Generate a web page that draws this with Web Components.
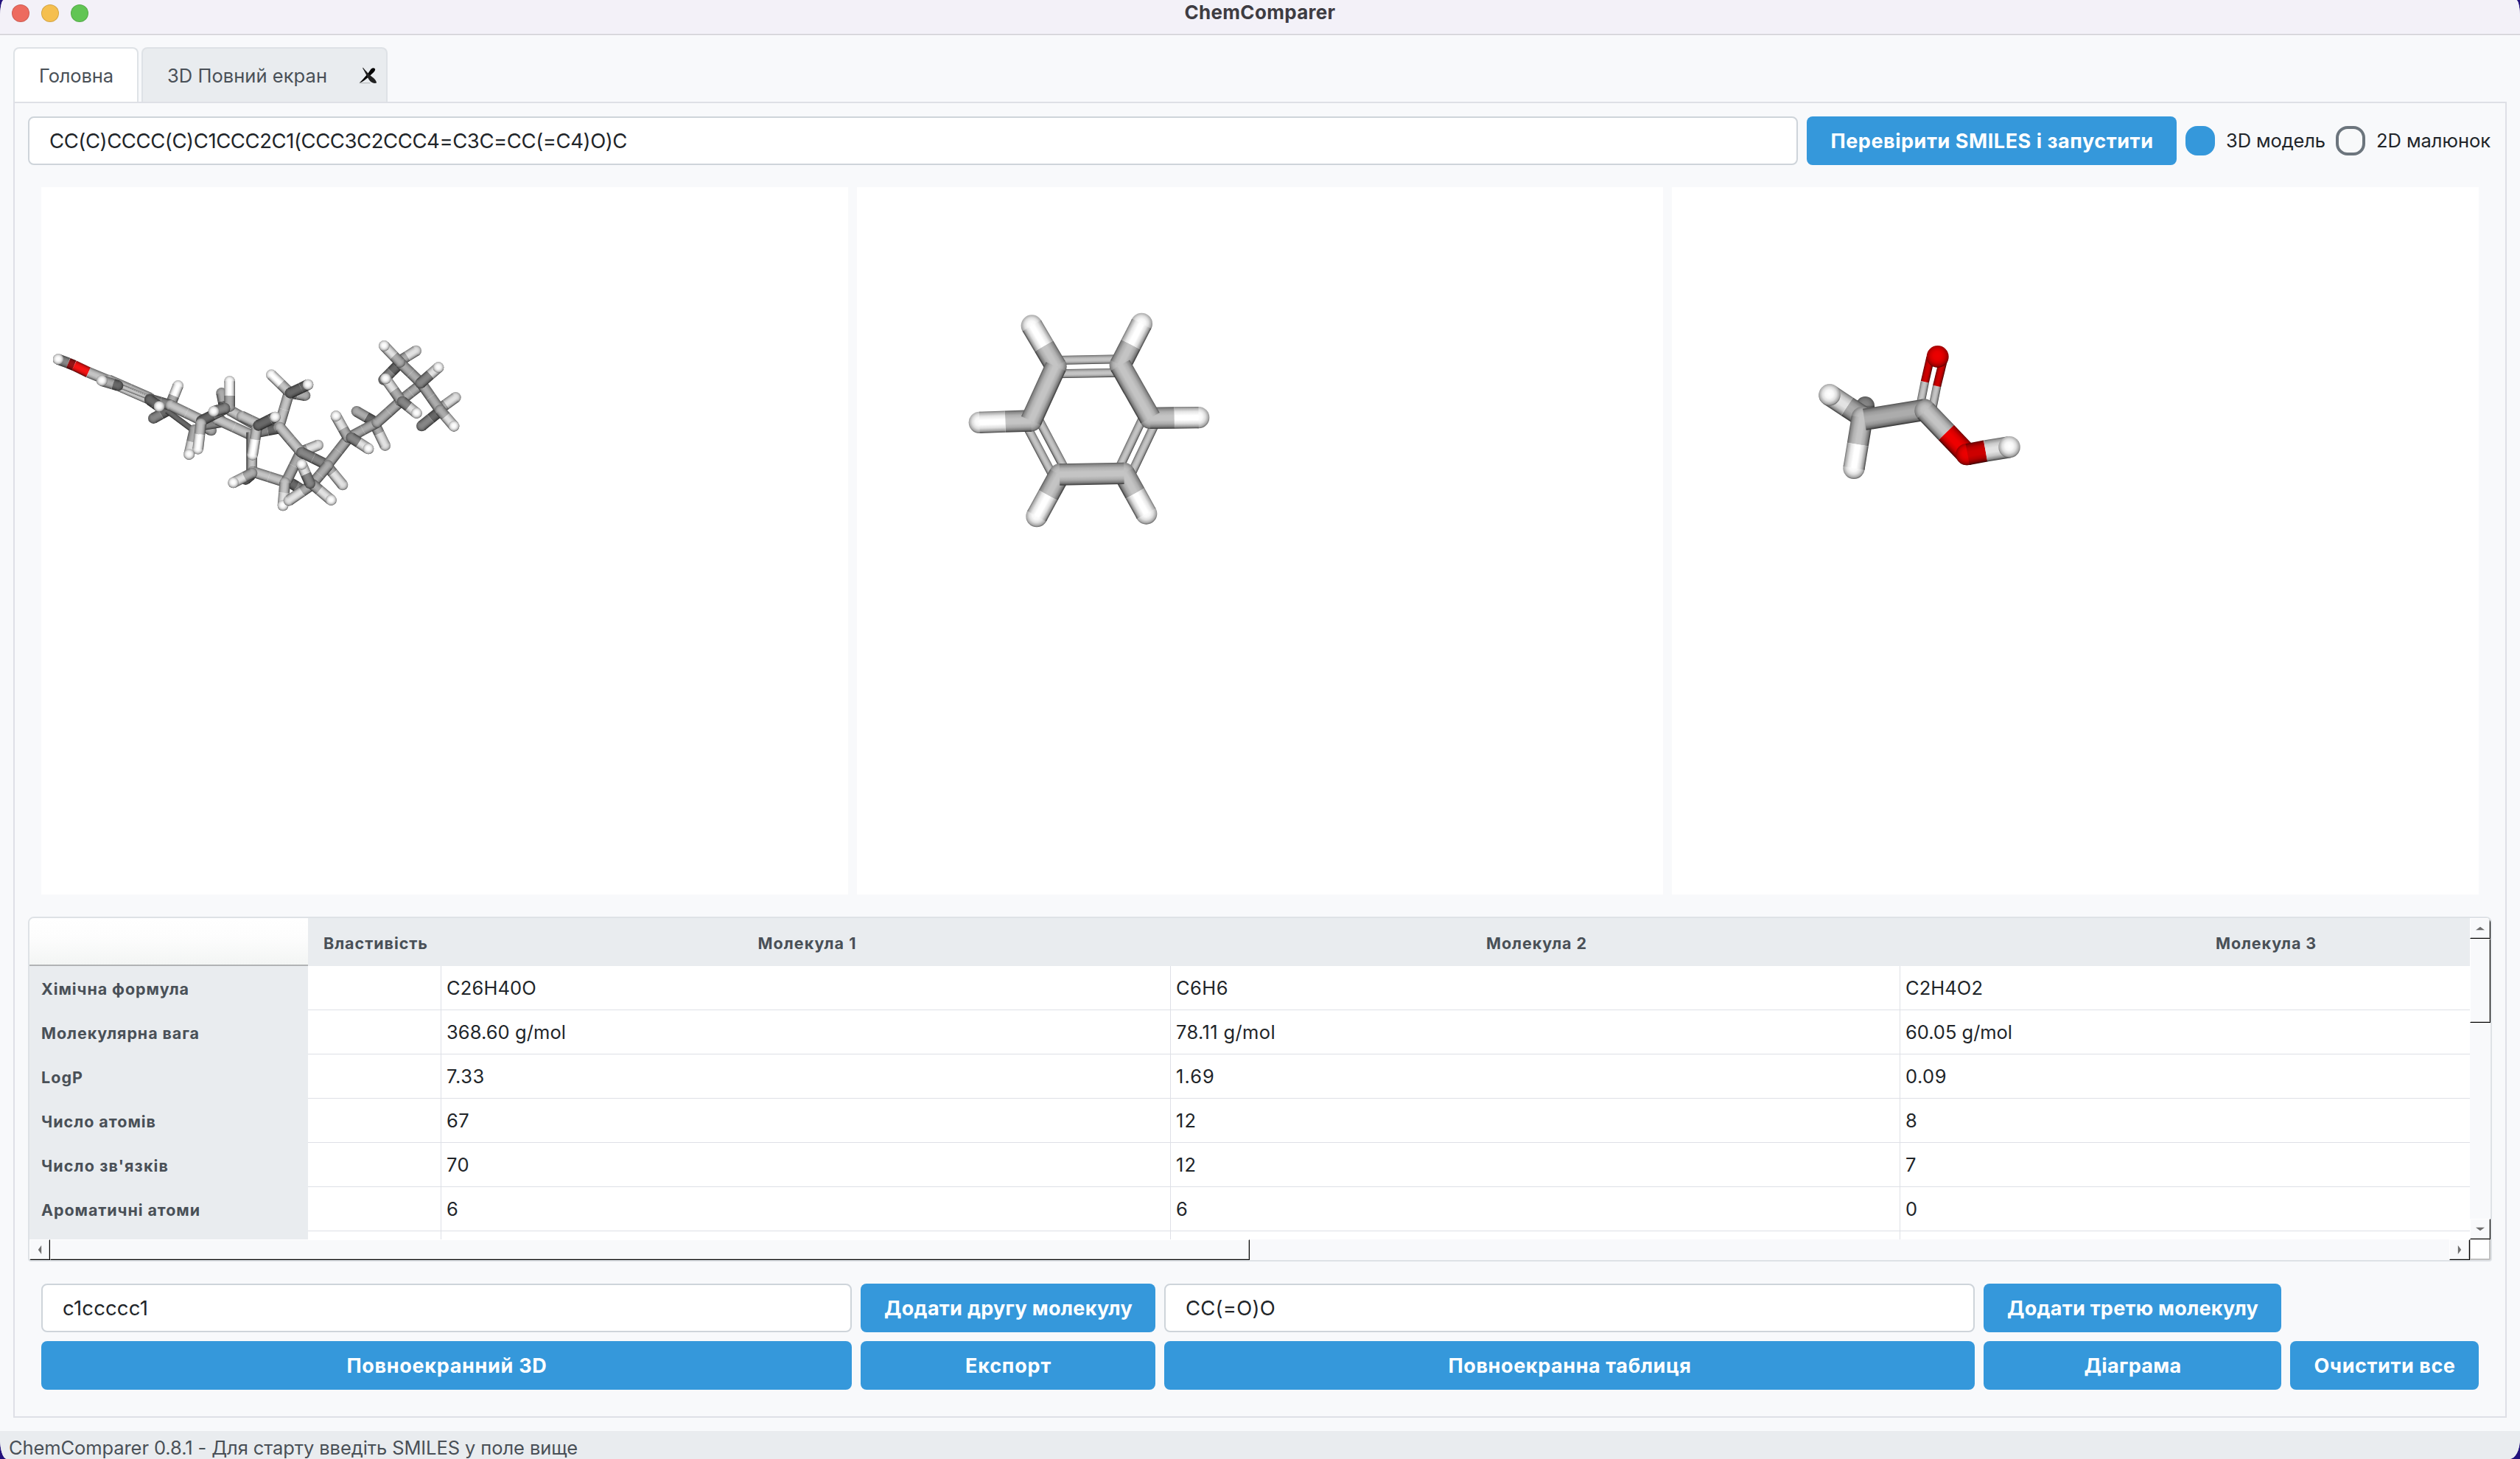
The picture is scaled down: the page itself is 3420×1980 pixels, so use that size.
<!DOCTYPE html>
<html lang="uk">
<head>
<meta charset="utf-8">
<title>ChemComparer</title>
<style>
html,body{margin:0;padding:0;width:3420px;height:1980px;overflow:hidden}
body{background:#23127c;font-family:Inter,"Liberation Sans",sans-serif;font-size:26px;color:#212529}
</style>
</head>
<body>
<app-window></app-window>
<script>
const define=(name,css,html,ready)=>customElements.define(name,class extends HTMLElement{
  connectedCallback(){
    if(this.shadowRoot)return;
    const r=this.attachShadow({mode:'open'});
    r.innerHTML='<style>*{box-sizing:border-box}:host{box-sizing:border-box}'+css+'</style>'+(typeof html==='function'?html(this):html);
    if(ready)ready(this,r);
  }
});

/* Label whose tracking is adjusted so that it takes a given width */
define('fit-text',':host{display:block;white-space:nowrap;flex:none;line-height:1.2}span{display:inline-block;white-space:pre}','<span><slot></slot></span>',(el,r)=>{
  const w=+el.getAttribute('w');if(!w)return;
  const s=r.querySelector('span'),n=el.textContent.length;
  const ls=(w-s.getBoundingClientRect().width)/n;
  s.style.letterSpacing=ls.toFixed(3)+'px';
});

define('title-bar',`:host{display:flex;height:48px;flex:none;background:#f3f1f8;border-bottom:1px solid #e6e6e9;box-shadow:inset 0 -1px #cfcdd3;position:relative;align-items:flex-start}
.l{display:flex;gap:16px;padding:6px 0 0 16px}
i{width:24px;height:24px;border-radius:50%;border:1px solid #0002;display:block}
.t{flex:1;display:flex;justify-content:center;padding-top:1px;margin-left:-120px;font-weight:700;color:#3e3c42}`,
`<div class="l"><i style="background:#ed6b5f"></i><i style="background:#f5bf4f"></i><i style="background:#61c554"></i></div><div class="t"><fit-text w="205">ChemComparer</fit-text></div>`);

define('tab-item',`:host{display:flex;align-items:center;height:76px;border:2px solid #dee2e6;border-bottom:0;border-radius:8px 8px 0 0;background:#e9ecef;color:#495057;padding:3px 32px 0 33px;font-size:25.5px}
:host([active]){background:#fff;height:74px}
svg{margin:-3px -20px 0 43px;display:block}`,
el=>'<slot></slot>'+(el.hasAttribute('closable')?`<svg width="27" height="25" viewBox="0 0 81 75"><path d="M4 68h46v4H2z" fill="#b9bcbe"/><path d="M2 70C14 60 44 24 54 8q14-8 18 2c0 10-16 22-30 34C30 54 18 66 2 70z" fill="#050505"/><path d="M18 2c8 10 24 28 36 38 8 6 24 18 24 30q-12 4-24-4C42 58 30 26 17 6z" fill="#222"/></svg>`:''));

define('text-field',`:host{display:flex;align-items:center;height:66px;border:2px solid #ced4da;border-radius:8px;background:#fff;padding:1px 27px 0;font-size:27.5px;color:#212529;min-width:0}`,'<slot></slot>');
define('push-button',`:host{display:flex;align-items:center;justify-content:center;height:66px;border-radius:8px;background:#3598db;color:#fff;font-weight:700;font-size:27px;padding:3px 0 0 1px;min-width:0}`,'<slot></slot>');
define('radio-option',`:host{display:flex;align-items:center;gap:15px;font-size:25.5px}
b{width:40px;height:40px;border-radius:16px;border:4px solid #6c757d;background:#f8f9fa}
:host([checked]) b{background:#3598db;border-color:#3598db}`,'<b></b><slot></slot>');

/* ---------- stick model rendering ---------- */
const COL={C:[196,196,196],M:[172,172,172],D:[134,134,134],K:[104,104,104],H:[255,255,255],h:[226,226,226],O:[238,0,0],o:[205,0,0],R:[245,20,20],r:[150,20,22]};
const shade=(c,k)=>'rgb('+COL[c].map(v=>Math.round(v*k)).join()+')';
let gid=0;
function cyl(x1,y1,x2,y2,r,c){
  const dx=x2-x1,dy=y2-y1,L=Math.hypot(dx,dy)||1;let nx=-dy/L,ny=dx/L;
  if(ny<0){nx=-nx;ny=-ny}
  const id='g'+(gid++);
  const st=[[0,.45],[.07,.68],[.22,.9],[.4,1],[.6,1],[.77,.87],[.91,.62],[1,.26]].map(([o,k])=>`<stop offset="${o}" stop-color="${shade(c,k)}"/>`).join('');
  return `<linearGradient id="${id}" gradientUnits="userSpaceOnUse" x1="${x1-nx*r}" y1="${y1-ny*r}" x2="${x1+nx*r}" y2="${y1+ny*r}">${st}</linearGradient><path d="M${x1-nx*r} ${y1-ny*r}L${x2-nx*r} ${y2-ny*r}L${x2+nx*r} ${y2+ny*r}L${x1+nx*r} ${y1+ny*r}Z" fill="url(#${id})"/>`;
}
function ball(x,y,r,c){
  const id='g'+(gid++);
  return `<radialGradient id="${id}" cx=".49" cy=".46" r=".55">${[[0,1],[.35,.97],[.6,.87],[.85,.66],[1,.34]].map(([o,k])=>`<stop offset="${o}" stop-color="${shade(c,k)}"/>`).join('')}</radialGradient><circle cx="${x}" cy="${y}" r="${r}" fill="url(#${id})"/>`;
}
/* bond between two atoms: colour a up to split f, colour b beyond; cap colour e */
function bond(x1,y1,x2,y2,r,a,b,f,e){
  b=b||a;f=f==null?.5:f;
  const mx=x1+(x2-x1)*f,my=y1+(y2-y1)*f;
  let s=ball(x1,y1,r,a)+ball(x2,y2,r,e||b);
  s+=cyl(x1,y1,mx,my,r,a)+cyl(mx,my,x2,y2,r,b);
  if(e)s+=ball(x2,y2,r,e);
  return s;
}
const models={
benzene(){
  const A=[[428,292],[690,287],[812,502],[705,727],[443,732],[327,513]],H=[[330,126],[777,118],[1009,500],[796,891],[350,902],[117,520]];
  let s='';
  const dbl=(p,q,o1,o2)=>{const dx=q[0]-p[0],dy=q[1]-p[1],L=Math.hypot(dx,dy),nx=-dy/L,ny=dx/L;
    return [o1,o2].map(o=>cyl(p[0]+nx*o,p[1]+ny*o,q[0]+nx*o,q[1]+ny*o,18,'C')).join('')};
  s+=dbl(A[0],A[1],-25,30)+dbl(A[2],A[3],-28,27)+dbl(A[4],A[5],-26,30);
  A.forEach((p,i)=>{const h=H[i];s+=ball(p[0],p[1],44,'C')+cyl(p[0],p[1],(p[0]+h[0])/2,(p[1]+h[1])/2,44,'C')+ball(h[0],h[1],44,'H')+cyl((p[0]+h[0])/2,(p[1]+h[1])/2,h[0],h[1],44,'H')});
  [[0,5],[1,2],[3,4]].forEach(([a,b])=>s+=cyl(...A[a],...A[b],44,'C'));
  return s;
},
acetic(){
  return ball(275,302,38,'D')+cyl(275,302,275,345,38,'K')
   +cyl(500,295,518,205,17,'C')+cyl(518,205,541,105,17,'o')
   +cyl(549,310,567,222,17,'C')+cyl(567,222,594,112,17,'o')
   +ball(570,102,45,'O')
   +ball(515,318,44,'M')+bond(262,345,130,258,44,'M','h',.46,'H')
   +bond(263,350,229,556,44,'C','H',.53)
   +cyl(272,358,515,319,44,'M')
   +bond(520,322,690,500,44,'C','O',.5)
   +ball(688,500,44,'O')+cyl(692,500,765,486,44,'o')+cyl(765,486,862,470,44,'h')+ball(862,470,44,'H');
},
steroid(){
  const r=22,B=(a,b,c,d,...z)=>bond(a+810,b,c+810,d,r,...z),A=(a,b,c,d,...z)=>bond(a,b,c,d,r,...z);
  let s='';
  /* far side of the ring system */
  s+=A(505,350,445,383,'K','D');
  s+=A(515,325,545,250,'M','H',.45);
  s+=cyl(500,352,612,436,12,'K');
  s+=A(612,430,590,530,'M','h',.5,'H');
  s+=A(640,410,680,432,'K','M');
  s+=A(735,345,722,280,'K','M');
  s+=A(700,385,720,392,'K','K');
  s+=cyl(640,415,735,400,18,'D');
  s+=A(705,388,840,450,'C');
  s+=cyl(843,440,843,600,20,'D')+cyl(849,440,846,600,20,'C');
  /* phenol end */
  s+=ball(57,143,r,'H')+cyl(57,143,98,158,r,'D')+cyl(98,158,122,168,r,'r')+cyl(122,168,180,196,r,'R')+cyl(180,196,275,235,r,'C')+ball(57,143,r,'H');
  s+=A(265,228,430,300,'C');
  s+=cyl(305,262,420,312,12,'C')+cyl(300,248,425,297,10,'C')+'<path d="M315 246L430 297" stroke="#555" stroke-width="2" stroke-dasharray="5 4"/>';
  s+=A(300,250,235,230,'K','M',.3,'H');
  s+=A(430,305,515,330,'D')+A(515,330,642,392,'C');
  s+=A(430,308,468,335,'K','K',.5,'H');
  s+=A(755,350,865,412,'C');
  s+=A(755,335,755,232,'M','H',.43);
  s+=A(640,393,735,345,'K','D');
  s+=A(735,342,690,355,'D','D',.5,'H');
  s+=A(638,405,626,508,'C','H',.42);
  /* ring D and methyl */
  s+=B(-5,375,65,408,'C')+B(60,440,140,425,'D','K');
  s+=B(190,280,252,290,'D','M');
  s+=B(145,420,188,275,'C')+B(183,272,115,206,'C','H',.45)+B(192,280,264,246,'K','K',.6,'H');
  s+=B(235,520,305,492,'M','h',.4);
  s+=B(38,600,170,642,'C')+B(200,650,235,672,'K','D');
  s+=B(235,520,178,635,'M')+B(150,420,235,520,'C');
  s+=B(170,645,162,738,'C','h',.45,'H');
  s+=B(10,632,30,615,'K')+B(36,606,-40,645,'M','h',.4,'H');
  s+=B(55,425,38,532,'C','H',.42)+B(62,412,130,378,'K','K',.7,'H');
  /* side chain */
  s+=B(238,522,332,568,'D')+B(340,575,405,654,'M','h',.4);
  s+=B(430,462,345,570,'M')+B(345,575,280,652,'M');
  s+=B(278,655,186,718,'M','h',.42)+B(280,650,358,716,'M','h',.4,'H')+B(272,648,238,571,'D','h',.5,'H');
  s+=B(540,400,462,355,'K','M')+B(535,405,578,494,'M','h',.45);
  s+=B(430,462,545,400,'M')+B(545,400,640,315,'M');
  s+=B(425,458,378,374,'M','h',.4,'H')+B(440,462,510,507,'D','h',.45,'H');
  s+=B(635,162,572,226,'K','D')+B(645,145,704,108,'M','h',.4);
  s+=B(640,312,725,245,'M')+B(635,300,580,222,'M','h',.4,'H')+B(648,315,706,362,'D','h',.45,'H');
  s+=B(725,240,640,158,'M')+B(638,155,574,88,'M','h',.4,'H');
  s+=B(800,355,727,414,'K','D')+B(800,345,865,298,'M','h',.4);
  s+=B(725,240,802,350,'M')+B(802,350,858,415,'M','h',.4,'H');
  s+=B(722,240,795,176,'D','h',.55,'H');
  return `<clipPath id="edge"><rect x="36" y="0" width="2000" height="900"/></clipPath><g clip-path="url(#edge)">${s}</g>`;
}};
define('molecule-view',`:host{display:block;flex:1;background:#fff;overflow:hidden}svg{display:block;width:100%;height:100%}`,
el=>{const[x,y]=el.getAttribute('at').split(',');return `<svg viewBox="0 0 1094.667 960"><g transform="translate(${x} ${y}) scale(.33333)">${models[el.getAttribute('model')]()}</g></svg>`});

/* ---------- table ---------- */
define('head-cell',`:host{display:flex;align-items:center;justify-content:center;background:#e9ecef;font-weight:700;font-size:21.5px;color:#495057;height:66px;flex:none;padding:3px 0 0 3px}`,'<slot></slot>');
define('row-head',`:host{display:flex;align-items:center;height:60px;padding:2px 0 0 16px;font-weight:700;font-size:21.5px;color:#495057;flex:none}`,'<slot></slot>');
define('data-cell',`:host{display:flex;align-items:center;height:60px;padding:1px 0 0 7px;border-right:1px solid #dee0e6;border-bottom:1px solid #dee0e6;background:#fff;flex:none;font-size:25.5px;color:#212529}`,'<slot></slot>');

define('scroll-button',`:host{display:flex;align-items:center;justify-content:center;width:28px;height:28px;background:#f8f9fb;border:1px solid #fff;border-right-color:#000;border-bottom-color:#000;box-shadow:inset -1px -1px #bfbfbf;flex:none}svg{display:block}`,
el=>`<svg width="12" height="12" viewBox="0 0 12 12"><path transform="rotate(${{up:0,right:90,down:180,left:270}[el.getAttribute('dir')]} 6 6)" d="M0 8.2L6 3.8L12 8.2Z" fill="#6e6e6e"/></svg>`);
define('v-scroll',`:host{display:flex;flex-direction:column;width:28px;flex:none;background:#f8f9fb}
.th{height:114px;border:1px solid #fff;border-right-color:#000;border-bottom-color:#000;box-shadow:inset -1px -1px #bfbfbf}.g{flex:1}`,
'<scroll-button dir="up"></scroll-button><div class="th"></div><div class="g"></div><scroll-button dir="down"></scroll-button>');
define('h-scroll',`:host{display:flex;height:28px;flex:1;background:#f8f9fb}
.th{width:1628px;border:1px solid #fff;border-right-color:#000;border-bottom-color:#000;box-shadow:inset -1px -1px #bfbfbf}.g{flex:1}`,
'<scroll-button dir="left"></scroll-button><div class="th"></div><div class="g"></div><scroll-button dir="right"></scroll-button>');

const heads=[['Властивість',181,142],['Молекула 1',990,134],['Молекула 2',990,137],['Молекула 3',990,137]];
const rows=[
 ['Хімічна формула',201,['C26H40O',122],['C6H6',71],['C2H4O2',105]],
 ['Молекулярна вага',215,['368.60 g/mol',162],['78.11 g/mol',135],['60.05 g/mol',145]],
 ['LogP',57,['7.33',52],['1.69',53],['0.09',56]],
 ['Число атомів',156,['67',31],['12',28],['8',17]],
 ['Число зв\'язків',173,['70',31],['12',28],['7',17]],
 ['Ароматичні атоми',216,['6',17],['6',17],['0',18]]];
define('property-table',`:host{display:flex;flex-direction:column;height:468px;border:2px solid #dee2e6;border-radius:8px 8px 4px 4px;background:#fff;flex:none;overflow:hidden}
.top{display:flex;height:436px;flex:none}.bot{display:flex;height:28px;flex:none}
.names{width:378px;flex:none;background:#e9ecef;overflow:hidden}
.corner{height:65px;background:linear-gradient(#fff,#fdfdfd 40%,#f3f5f4);border-bottom:2px solid #b1b3b4;margin-bottom:1px}
.body{flex:1;min-width:0;overflow:hidden;background:#fff}.r{display:flex}
.rows{margin-top:-1px}
.sq{width:28px;border:1px solid #bfbfbf;border-width:0 2px 2px 1px;background:#fff;flex:none}`,
()=>{
 const W=heads.map(h=>h[1]);
 const cells=a=>a.map((c,i)=>`<data-cell style="width:${W[i]}px">${c?`<fit-text w="${c[1]}">${c[0]}</fit-text>`:''}</data-cell>`).join('');
 return `<div class="top"><div class="names"><div class="corner"></div>${rows.map(r=>`<row-head><fit-text w="${r[1]}">${r[0]}</fit-text></row-head>`).join('')}</div>
 <div class="body"><div class="r">${heads.map(h=>`<head-cell style="width:${h[1]}px"><fit-text w="${h[2]}">${h[0]}</fit-text></head-cell>`).join('')}</div>
 <div class="rows">${rows.map(r=>`<div class="r">${cells([null,r[2],r[3],r[4]])}</div>`).join('')}<div class="r">${cells([null,null,null,null])}</div></div></div><v-scroll></v-scroll></div>
 <div class="bot"><h-scroll></h-scroll><div class="sq"></div></div>`});

define('action-grid',`:host{display:grid;grid-template-columns:1100px 400px 1100px 404px 256px;column-gap:12px;row-gap:12px;padding:0 18px;margin-top:30px}`,
`<text-field><fit-text w="116">c1ccccc1</fit-text></text-field><push-button><fit-text w="337">Додати другу молекулу</fit-text></push-button><text-field><fit-text w="122">CC(=O)O</fit-text></text-field><push-button><fit-text w="341">Додати третю молекулу</fit-text></push-button><span></span>
<push-button><fit-text w="272">Повноекранний 3D</fit-text></push-button><push-button><fit-text w="117">Експорт</fit-text></push-button><push-button><fit-text w="330">Повноекранна таблиця</fit-text></push-button><push-button><fit-text w="132">Діаграма</fit-text></push-button><push-button><fit-text w="192">Очистити все</fit-text></push-button>`);

define('status-bar',`:host{display:flex;align-items:center;height:38px;background:#e9ecef;color:#495057;padding:9px 0 0 12px;font-size:25.5px;flex:none}`,'<fit-text w="772">ChemComparer 0.8.1 - Для старту введіть SMILES у поле вище</fit-text>');

define('app-window',`:host{display:flex;flex-direction:column;width:3420px;height:1980px;background:#f8f9fb;overflow:hidden;border-radius:5px 5px 14px 9px/24px 24px 28px 28px}
.tabs{display:flex;gap:4px;padding:16px 18px 0;height:90px;flex:none;align-items:flex-start}
.pane{margin:0 18px;height:1786px;border:2px solid #dee0e6;padding:18px 18px 0;display:flex;flex-direction:column;flex:none}
.tabs tab-item[closable]{height:74px}
.query{display:flex;align-items:center}
.query text-field{width:2402px}.query push-button{width:502px;margin:0 12px}
.views{display:flex;gap:12px;height:960px;margin:30px 18px;flex:none}
status-bar{margin-top:auto}`,
`<title-bar></title-bar>
<div class="tabs"><tab-item active style="width:170px"><fit-text w="101">Головна</fit-text></tab-item><tab-item closable style="width:334px"><fit-text w="217">3D Повний екран</fit-text></tab-item></div>
<div class="pane">
<div class="query"><text-field><fit-text w="784">CC(C)CCCC(C)C1CCC2C1(CCC3C2CCC4=C3C=CC(=C4)O)C</fit-text></text-field><push-button><fit-text w="438">Перевірити SMILES і запустити</fit-text></push-button><radio-option checked><fit-text w="135">3D модель</fit-text></radio-option><radio-option style="margin-left:14px"><fit-text w="155">2D малюнок</fit-text></radio-option></div>
<div class="views"><molecule-view model="steroid" at="4,186"></molecule-view><molecule-view model="benzene" at="127.33,146"></molecule-view><molecule-view model="acetic" at="170.67,196"></molecule-view></div>
<property-table></property-table>
<action-grid></action-grid>
</div>
<status-bar></status-bar>`);
</script>
</body>
</html>
